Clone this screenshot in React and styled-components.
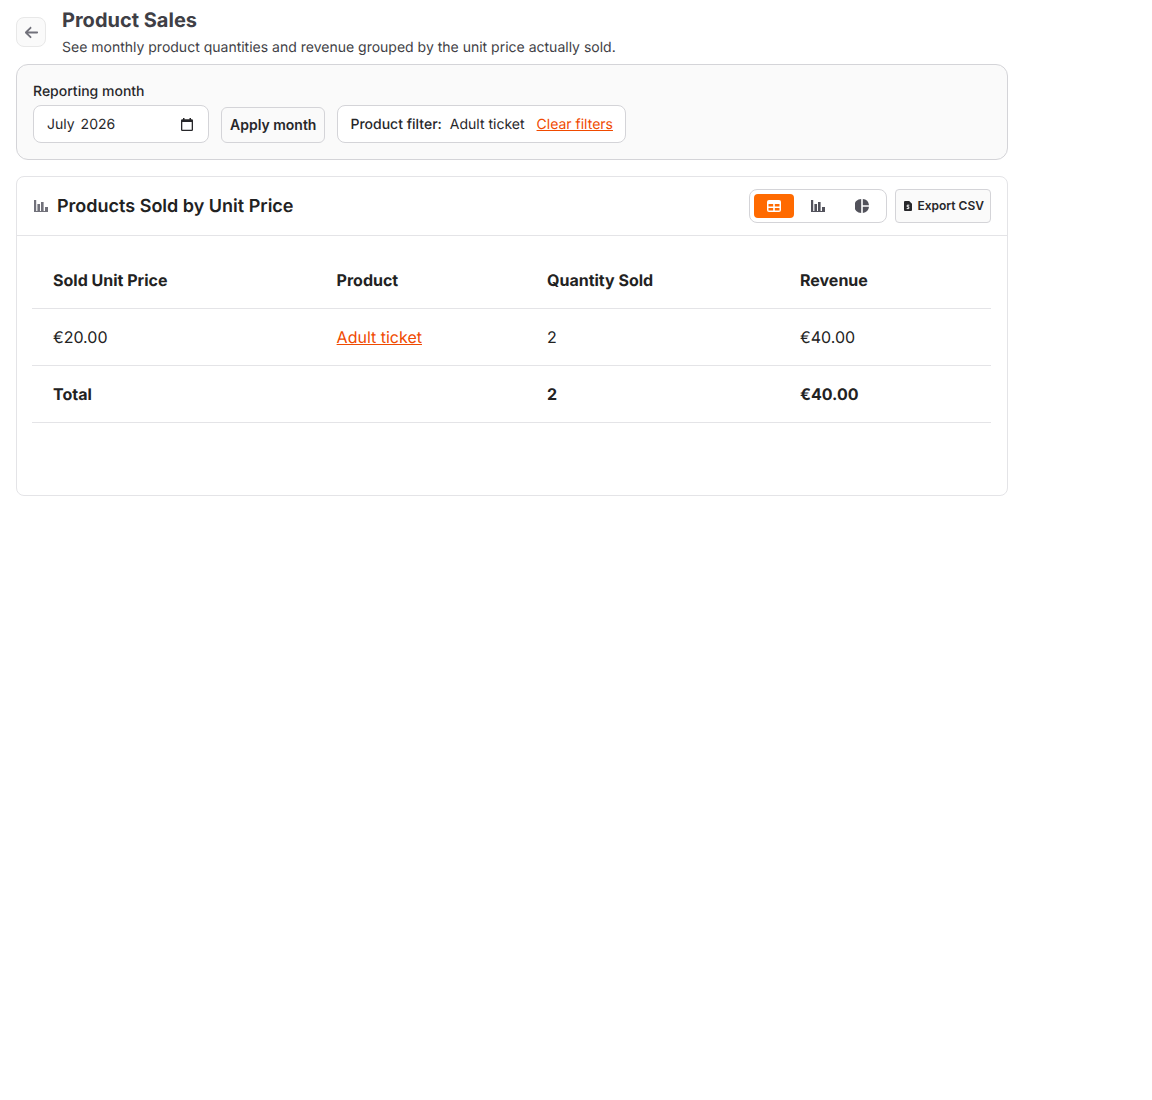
import React from 'react'
import styled, { createGlobalStyle } from 'styled-components'
import { FaArrowLeft } from 'react-icons/fa6'

const GlobalStyle = createGlobalStyle`
  * {
    box-sizing: border-box;
  }
  body {
    margin: 0;
    background: #fff;
    color: #222;
    font-family: Inter, "Liberation Sans", sans-serif;
    text-rendering: geometricPrecision;
  }
`

const rows = [{ price: '€20.00', product: 'Adult ticket', quantity: '2', revenue: '€40.00' }]

const BarsIcon = () => (
  <svg width="14" height="12" viewBox="0 0 14 12" fill="currentColor">
    <rect x="0" y="0" width="2.2" height="12" />
    <rect x="3.4" y="4" width="2.6" height="8" />
    <rect x="7" y="2" width="2.6" height="10" />
    <rect x="11" y="7" width="3" height="5" />
    <rect x="0" y="11" width="14" height="1" />
  </svg>
)

const TableIcon = () => (
  <svg width="14" height="12" viewBox="0 0 14 12" fill="currentColor">
    <path d="M2 0h10a2 2 0 0 1 2 2v8a2 2 0 0 1-2 2H2a2 2 0 0 1-2-2V2a2 2 0 0 1 2-2zm-.5 4v2.5h4.7V4zm6.3 0v2.5h4.7V4zm-6.3 4v2.5h4.7V8zm6.3 0v2.5h4.7V8z" fillRule="evenodd" />
  </svg>
)

const PieIcon = () => (
  <svg width="14" height="14" viewBox="0 0 14 14" fill="currentColor">
    <path d="M6.2 0v14A7 7 0 0 1 6.2 0z" />
    <path d="M7.8 0A7 7 0 0 1 14 6.2H7.8z" />
    <path d="M14 7.8A7 7 0 0 1 7.8 14V7.8z" />
  </svg>
)

const FileIcon = () => (
  <svg width="8" height="10" viewBox="0 0 8 10">
    <path d="M1 0h4.2L8 2.8V9a1 1 0 0 1-1 1H1a1 1 0 0 1-1-1V1a1 1 0 0 1 1-1z" fill="currentColor" />
    <path d="M5.3 4.2H3.2v1.6h1.6v1.8H2.7" fill="none" stroke="#fff" strokeWidth="1" />
  </svg>
)

const CalendarIcon = () => (
  <svg width="12" height="13" viewBox="0 0 12 13" fill="currentColor">
    <path d="M2 0h1.5v1.3h5V0H10v1.3h.7A1.3 1.3 0 0 1 12 2.6v9.1A1.3 1.3 0 0 1 10.7 13H1.3A1.3 1.3 0 0 1 0 11.7V2.6a1.3 1.3 0 0 1 1.3-1.3H2zM1.3 4v7.7h9.4V4z" fillRule="evenodd" />
  </svg>
)

const App = () => {
  return (
    <Page>
      <GlobalStyle />
      <Header>
        <BackButton aria-label="Back">
          <FaArrowLeft />
        </BackButton>
        <div>
          <Title>Product Sales</Title>
          <Subtitle>See monthly product quantities and revenue grouped by the unit price actually sold.</Subtitle>
        </div>
      </Header>

      <FilterPanel>
        <MonthField>
          <FieldLabel>Reporting month</FieldLabel>
          <MonthBox>
            <MonthValue>
              <span>July</span>
              <span>2026</span>
            </MonthValue>
            <CalendarIcon />
          </MonthBox>
        </MonthField>
        <ApplyButton>Apply month</ApplyButton>
        <FilterChip>
          <strong>Product filter:</strong>
          <span>Adult ticket</span>
          <OrangeLink href="#">Clear filters</OrangeLink>
        </FilterChip>
      </FilterPanel>

      <Card>
        <CardHeader>
          <CardTitle>
            <TitleIcon>
              <BarsIcon />
            </TitleIcon>
            Products Sold by Unit Price
          </CardTitle>
          <CardActions>
            <ViewToggle>
              <ViewButton $active aria-label="Table">
                <TableIcon />
              </ViewButton>
              <ViewButton aria-label="Bar chart">
                <BarsIcon />
              </ViewButton>
              <ViewButton aria-label="Pie chart">
                <PieIcon />
              </ViewButton>
            </ViewToggle>
            <ExportButton>
              <FileIcon />
              Export CSV
            </ExportButton>
          </CardActions>
        </CardHeader>
        <CardBody>
          <SalesTable>
            <colgroup>
              <col width="283.6" />
              <col width="210.4" />
              <col width="253" />
              <col width="212" />
            </colgroup>
            <thead>
              <tr>
                <HeadCell>Sold Unit Price</HeadCell>
                <HeadCell>Product</HeadCell>
                <HeadCell>Quantity Sold</HeadCell>
                <HeadCell>Revenue</HeadCell>
              </tr>
            </thead>
            <tbody>
              {rows.map((row) => (
                <tr key={row.price}>
                  <Cell>{row.price}</Cell>
                  <Cell>
                    <OrangeLink href="#">{row.product}</OrangeLink>
                  </Cell>
                  <Cell>{row.quantity}</Cell>
                  <Cell>{row.revenue}</Cell>
                </tr>
              ))}
              <tr>
                <Cell $bold>Total</Cell>
                <Cell />
                <Cell $bold>2</Cell>
                <Cell $bold>€40.00</Cell>
              </tr>
            </tbody>
          </SalesTable>
        </CardBody>
      </Card>
    </Page>
  )
}

export default App

const Page = styled.div`
  width: 1024px;
  padding: 8px 16px 0;
`

const Header = styled.header`
  display: flex;
  align-items: flex-start;
  gap: 16px;
  margin-bottom: 6px;
`

const BackButton = styled.button`
  width: 30px;
  height: 30px;
  margin-top: 9px;
  padding: 0;
  display: flex;
  align-items: center;
  justify-content: center;
  background: #fafafa;
  border: 1px solid #e8e8e8;
  border-radius: 8px;
  color: #71717a;
  font-size: 15px;
`

const Title = styled.h1`
  margin: 0;
  color: #3f3f46;
  font-size: 20px;
  line-height: 24px;
  font-weight: 700;
`

const Subtitle = styled.p`
  margin: 6px 0 0;
  color: #3f3f46;
  font-size: 14px;
  line-height: 20px;
`

const FilterPanel = styled.section`
  display: flex;
  align-items: flex-end;
  gap: 12px;
  height: 96px;
  padding: 0 16px 16px;
  background: #fafafa;
  border: 1px solid #d4d4d8;
  border-radius: 12px;
  margin-bottom: 16px;
`

const MonthField = styled.div`
  display: flex;
  flex-direction: column;
  gap: 3px;
`

const FieldLabel = styled.label`
  color: #27272a;
  font-size: 14px;
  line-height: 20px;
  font-weight: 500;
`

const MonthBox = styled.div`
  display: flex;
  align-items: center;
  justify-content: space-between;
  width: 176px;
  height: 38px;
  padding: 0 15px 0 13px;
  background: #fff;
  border: 1px solid #d4d4d8;
  border-radius: 8px;
  color: #27272a;
  font-size: 14px;
`

const MonthValue = styled.div`
  display: flex;
  gap: 6px;
`

const ApplyButton = styled.button`
  height: 36px;
  padding: 0 8px 1px;
  background: #fafafa;
  border: 1px solid #d4d4d8;
  border-radius: 6px;
  color: #27272a;
  font-family: inherit;
  font-size: 14px;
  font-weight: 600;
`

const FilterChip = styled.div`
  display: flex;
  align-items: center;
  gap: 8px;
  height: 38px;
  padding: 0 12px;
  background: #fff;
  border: 1px solid #d4d4d8;
  border-radius: 8px;
  color: #27272a;
  font-size: 14px;

  strong {
    font-weight: 500;
  }

  a {
    margin-left: 4px;
  }
`

const OrangeLink = styled.a`
  color: #f04a00;
  text-decoration: underline;
`

const Card = styled.section`
  height: 320px;
  background: #fff;
  border: 1px solid #e4e4e7;
  border-radius: 8px;
`

const CardHeader = styled.div`
  display: flex;
  align-items: center;
  justify-content: space-between;
  height: 59px;
  padding: 0 16px 0 17px;
  border-bottom: 1px solid #e4e4e7;
`

const CardTitle = styled.h2`
  display: flex;
  align-items: center;
  gap: 9px;
  margin: 0;
  color: #222;
  font-size: 18px;
  font-weight: 600;
`

const TitleIcon = styled.span`
  display: flex;
  color: #71717a;
`

const CardActions = styled.div`
  display: flex;
  align-items: center;
  gap: 8px;
`

const ViewToggle = styled.div`
  display: flex;
  gap: 4px;
  width: 138px;
  height: 34px;
  padding: 4px;
  border: 1px solid #d4d4d8;
  border-radius: 8px;
`

const ViewButton = styled.button`
  width: 40px;
  height: 24px;
  padding: 0;
  display: flex;
  align-items: center;
  justify-content: center;
  background: ${(props) => (props.$active ? '#ff6a00' : 'transparent')};
  border: 0;
  border-radius: 4px;
  color: ${(props) => (props.$active ? '#fff' : '#52525b')};
`

const ExportButton = styled.button`
  display: flex;
  align-items: center;
  gap: 5px;
  height: 34px;
  padding: 0 6px 1px 8px;
  background: #fafafa;
  border: 1px solid #d4d4d8;
  border-radius: 4px;
  color: #27272a;
  font-family: inherit;
  font-size: 12px;
  font-weight: 600;
`

const CardBody = styled.div`
  padding: 16px 15px;
`

const SalesTable = styled.table`
  width: 959px;
  table-layout: fixed;
  border-collapse: collapse;
  font-size: 16px;
`

const HeadCell = styled.th`
  height: 56px;
  padding: 0 20px 0 21px;
  border-bottom: 1px solid #e4e4e7;
  color: #222;
  text-align: left;
  font-weight: 650;
`

const Cell = styled.td`
  height: 57px;
  padding: 0 20px 0 21px;
  border-bottom: 1px solid #e4e4e7;
  color: #222;
  font-weight: ${(props) => (props.$bold ? 700 : 400)};
`
